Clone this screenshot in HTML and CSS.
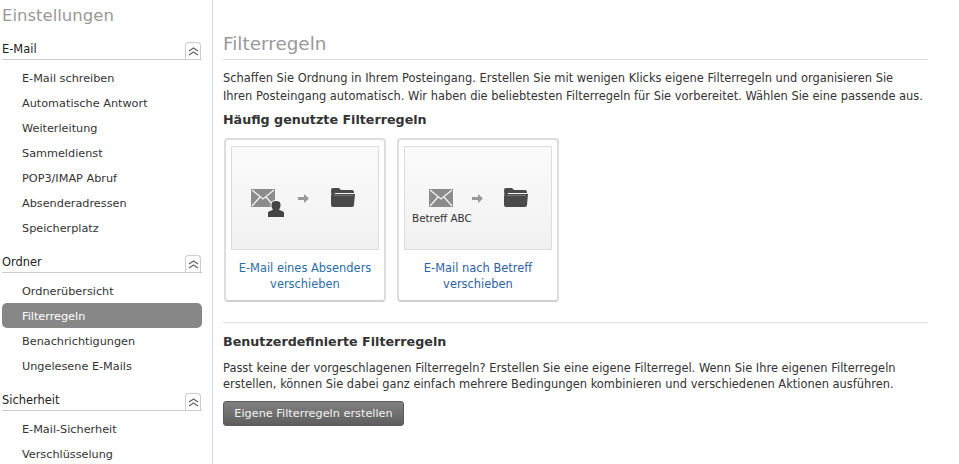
FILE: index.html
```html
<!doctype html>
<html>
<head>
<meta charset="utf-8">
<title>Filterregeln</title>
<link rel="stylesheet" href="styles.css">
</head>
<body>
<div class="page">
<div class="sidebar">
	<div class="side-title">Einstellungen</div>

	<div class="group-head"><span>E-Mail</span><a class="toggle"><svg width="11" height="9" viewBox="0 0 11 9"><path d="M1 4 5.500 1 10 4M1 8 5.500 5 10 8" fill="none" stroke="#666" stroke-width="1.300"/></svg></a></div>
	<ul class="nav">
		<li>E-Mail schreiben</li>
		<li>Automatische Antwort</li>
		<li>Weiterleitung</li>
		<li>Sammeldienst</li>
		<li>POP3/IMAP Abruf</li>
		<li>Absenderadressen</li>
		<li>Speicherplatz</li>
	</ul>

	<div class="group-head"><span>Ordner</span><a class="toggle"><svg width="11" height="9" viewBox="0 0 11 9"><path d="M1 4 5.500 1 10 4M1 8 5.500 5 10 8" fill="none" stroke="#666" stroke-width="1.300"/></svg></a></div>
	<ul class="nav">
		<li>Ordnerübersicht</li>
		<li class="active">Filterregeln</li>
		<li>Benachrichtigungen</li>
		<li>Ungelesene E-Mails</li>
	</ul>

	<div class="group-head"><span>Sicherheit</span><a class="toggle"><svg width="11" height="9" viewBox="0 0 11 9"><path d="M1 4 5.500 1 10 4M1 8 5.500 5 10 8" fill="none" stroke="#666" stroke-width="1.300"/></svg></a></div>
	<ul class="nav">
		<li>E-Mail-Sicherheit</li>
		<li>Verschlüsselung</li>
	</ul>
</div>

<div class="main">
	<h1>Filterregeln</h1>
	<p class="intro">Schaffen Sie Ordnung in Ihrem Posteingang. Erstellen Sie mit wenigen Klicks eigene Filterregeln und organisieren Sie<br>Ihren Posteingang automatisch. Wir haben die beliebtesten Filterregeln für Sie vorbereitet. Wählen Sie eine passende aus.</p>
	<h2>Häufig genutzte Filterregeln</h2>

	<div class="cards">
		<a class="card">
			<div class="preview">
				<div class="icons">
					<span class="mail-wrap">
						<svg width="34" height="29" viewBox="0 0 34 29">
							<path d="M0 0H24V18H0Z" fill="#8c8c8c"/>
							<path d="M1 1 12 10 23 1M1 17 9 8M23 17 15 8" fill="none" stroke="#f6f6f6" stroke-width="1.200"/>
							<path d="M17 28V24C17 22 20 22 22 20.500 20.500 19 20.500 17 20.500 15.500 20.500 13 22 12 25 12 28 12 29.500 13 29.500 15.500 29.500 17 29.500 19 28 20.500 30 22 33 22 33 24V28Z" fill="#444" stroke="#f6f6f6" stroke-width="2" paint-order="stroke"/>
						</svg>
					</span>
					<svg class="arrow" width="11" height="9" viewBox="0 0 11 9"><path d="M0 3H6V0L11 4.500 6 9V6H0Z" fill="#999"/></svg>
					<svg class="folder" width="24" height="19" viewBox="0 0 24 19"><path d="M0 2Q0 0 2 0H8L10 2H21Q23 2 23 4V5H5Q3 5 3 7L2 16H1Z" fill="#4a4a4a"/><path d="M3 6H24L23 17Q23 19 21 19H2Q0 19 0 17V8Q1 6 3 6Z" fill="#4a4a4a"/><path d="M3 7.500H22" stroke="#777" stroke-width="1"/></svg>
				</div>
			</div>
			<div class="card-label">E-Mail eines Absenders verschieben</div>
		</a>
		<a class="card">
			<div class="preview">
				<div class="icons subject">
					<span class="mail-wrap">
						<svg width="24" height="18" viewBox="0 0 24 18">
							<path d="M0 0H24V18H0Z" fill="#8c8c8c"/>
							<path d="M1 1 12 10 23 1M1 17 9 8M23 17 15 8" fill="none" stroke="#f6f6f6" stroke-width="1.200"/>
						</svg>
						<span class="subject-text">Betreff ABC</span>
					</span>
					<svg class="arrow" width="11" height="9" viewBox="0 0 11 9"><path d="M0 3H6V0L11 4.500 6 9V6H0Z" fill="#999"/></svg>
					<svg class="folder" width="24" height="19" viewBox="0 0 24 19"><path d="M0 2Q0 0 2 0H8L10 2H21Q23 2 23 4V5H5Q3 5 3 7L2 16H1Z" fill="#4a4a4a"/><path d="M3 6H24L23 17Q23 19 21 19H2Q0 19 0 17V8Q1 6 3 6Z" fill="#4a4a4a"/><path d="M3 7.500H22" stroke="#777" stroke-width="1"/></svg>
				</div>
			</div>
			<div class="card-label second">E-Mail nach Betreff verschieben</div>
		</a>
	</div>

	<hr>
	<h2 class="custom-head">Benutzerdefinierte Filterregeln</h2>
	<p class="custom">Passt keine der vorgeschlagenen Filterregeln? Erstellen Sie eine eigene Filterregel. Wenn Sie Ihre eigenen Filterregeln<br>erstellen, können Sie dabei ganz einfach mehrere Bedingungen kombinieren und verschiedenen Aktionen ausführen.</p>
	<button class="btn">Eigene Filterregeln erstellen</button>
</div>
</div>
</body>
</html>
```

FILE: styles.css
```css
html, body {
	margin: 0;
	padding: 0;
	height: 464px;
	overflow: hidden;
	background: #fff;
}
body {
	font-family: "DejaVu Sans", Verdana, sans-serif;
	font-size: 11.45px;
	color: #333;
}
.page {
	display: flex;
	height: 464px;
}
.sidebar {
	width: 212px;
	height: 464px;
	border-right: 1px solid #c9dcec;
	overflow: hidden;
	flex: none;
}
.side-title {
	font-size: 16.5px;
	line-height: 20px;
	color: #999;
	padding: 6px 0 0 2px;
	height: 35px;
}
.group-head {
	display: flex;
	justify-content: space-between;
	align-items: flex-end;
	width: 200px;
	height: 18px;
	margin: 0 0 0 2px;
	border-bottom: 1px solid #ccc;
	color: #222;
	line-height: 16px;
}
.group-head span {
	padding-bottom: 2px;
}
.toggle {
	width: 16px;
	height: 17px;
	margin-right: 1px;
	box-sizing: border-box;
	border: 1px solid #ccc;
	border-bottom: 0;
	border-radius: 4px 4px 0 0;
	display: flex;
	align-items: center;
	justify-content: center;
}
.nav {
	list-style: none;
	margin: 5px 0 14px;
	padding: 0;
	font-size: 11.25px;
}
.nav li {
	height: 25px;
	line-height: 27px;
	width: 180px;
	padding-left: 20px;
	margin-left: 2px;
	color: #333;
}
.nav li.active {
	background: #878787;
	border-radius: 5px;
	color: #fff;
}
.main {
	margin-left: 10px;
	width: 705px;
}
h1 {
	font-size: 18.4px;
	font-weight: normal;
	color: #999;
	margin: 0;
	padding-top: 34px;
	height: 25px;
	line-height: 20px;
	border-bottom: 1px solid #ddd;
}
h2 {
	font-size: 12.7px;
	line-height: 16px;
	font-weight: bold;
	color: #333;
	margin: 0;
}
.intro {
	margin: 9px 0 7px;
	line-height: 18px;
}
.cards {
	display: flex;
	gap: 11px;
	margin: 10px 0 0 1px;
}
.card {
	display: block;
	width: 162px;
	height: 164px;
	box-sizing: border-box;
	border: 2px solid #ddd;
	border-bottom-color: #cfcfcf;
	border-radius: 4px;
	padding: 6px 5px 0;
	background: #fff;
}
.preview {
	height: 104px;
	box-sizing: border-box;
	border: 1px solid #ddd;
	background: linear-gradient(#fbfbfb, #f1f1f1);
	padding: 42px 0 0 19px;
}
.icons {
	display: flex;
	align-items: flex-start;
}
.icons.subject {
	padding-left: 5px;
}
.mail-wrap {
	display: block;
	width: 47px;
	position: relative;
}
.subject .mail-wrap {
	width: 43px;
}
.subject-text {
	position: absolute;
	left: -17px;
	top: 23px;
	font-size: 10.4px;
	line-height: 12px;
	white-space: nowrap;
	color: #333;
}
.arrow {
	margin-top: 5px;
}
.folder {
	margin: -1px 0 0 22px;
}
.subject .folder {
	margin-left: 21px;
}
.card-label {
	color: #2a6ea6;
	text-align: center;
	line-height: 16px;
	margin: 10px -3px 0;
}
.card-label.second {
	color: #2e5fa4;
}
hr {
	border: 0;
	border-top: 1px solid #ddd;
	margin: 20px 0 11px;
}
.custom {
	margin: 10px 0 9px;
	line-height: 16px;
}
.btn {
	display: block;
	width: 181px;
	height: 25px;
	padding: 0;
	font: 11.3px "DejaVu Sans", Verdana, sans-serif;
	color: #f2f2f2;
	background: linear-gradient(#808080, #5e5e5e);
	border: 1px solid #5a5a5a;
	border-radius: 3px;
}
```
